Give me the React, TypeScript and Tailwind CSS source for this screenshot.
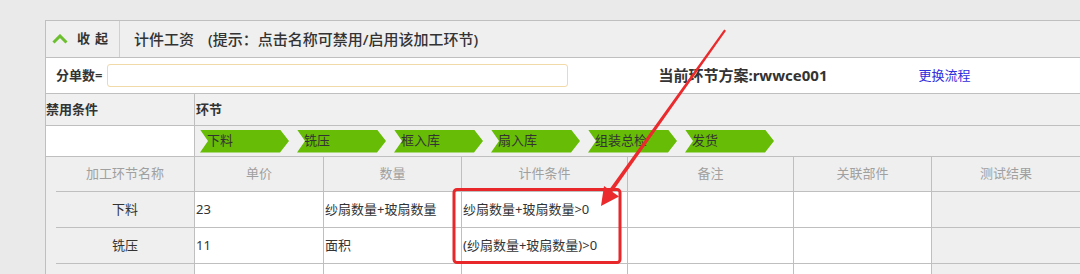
const steps = ['下料', '铣压', '框入库', '扇入库', '组装总检', '发货']

const columns = [
  { label: '单价', w: 'w-[129px]' },
  { label: '数量', w: 'w-[138px]' },
  { label: '计件条件', w: 'w-[166px]' },
  { label: '备注', w: 'w-[166px]' },
  { label: '关联部件', w: 'w-[138px]' },
]

const rows = [
  { name: '下料', cells: ['23', '纱扇数量+玻扇数量', '纱扇数量+玻扇数量>0', '', ''] },
  { name: '铣压', cells: ['11', '面积', '(纱扇数量+玻扇数量)>0', '', ''] },
  { name: '', cells: ['', '', '', '', ''] },
]

function Chevron({ label }: { label: string }) {
  return (
    <div className="flex h-[23px] w-[89px] items-center bg-[#67bc06] pl-[7px] text-[13px] text-[#333] [clip-path:polygon(0_0,calc(100%-9px)_0,100%_50%,calc(100%-9px)_100%,0_100%,8px_50%)]">
      {label}
    </div>
  )
}

function Annotation() {
  // red box + arrow drawn over the table
  return (
    <svg className="pointer-events-none absolute left-0 top-0" width="1080" height="274" viewBox="0 0 1080 274">
      <rect x="454" y="189.5" width="166" height="73" rx="3" fill="none" stroke="#e8272b" strokeWidth="3" />
      <polygon points="724.2,29.6 726,30.8 611.9,192.6 608.6,190.4" fill="#ea2a2c" />
      <polygon points="601,206 604,186 619,196.5" fill="#ea2a2c" />
    </svg>
  )
}

export default function App() {
  return (
    <div className="relative h-[274px] w-[1080px] overflow-hidden bg-[#e9eae9] pl-[45px] pt-[20px] font-['Noto_Sans','Noto_Sans_CJK_SC',sans-serif] text-[13px] text-[#333]">
      <div className="border-l border-t border-[#bfbfbf] bg-white">
        <div className="flex h-[37px] border-b border-[#bfbfbf] bg-[#efefef]">
          <div className="flex w-[74px] items-center border-r border-[#d0d0d0] pl-[6px]">
            <svg width="16" height="10" viewBox="0 0 16 10">
              <path d="M1.5 8.5 L8 2 L14.5 8.5" fill="none" stroke="#6cbf2e" strokeWidth="3" />
            </svg>
            <span className="ml-[9px] font-bold tracking-[5px]">收起</span>
          </div>
          <div className="flex items-center pl-[14px] text-[15px] font-medium">
            <span>计件工资</span>
            <span className="ml-[14px]">(提示：点击名称可禁用/启用该加工环节)</span>
          </div>
        </div>

        <div className="flex h-[36px] items-center border-b border-[#bfbfbf] pl-[10px]">
          <span className="font-bold">分单数=</span>
          <div className="ml-[5px] h-[23px] w-[461px] rounded-[3px] border border-[#f1d9a8] bg-white" />
          <span className="ml-[90px] text-[15px] font-bold">当前环节方案:rwwce001</span>
          <span className="ml-[91px] text-[#2e2edc]">更换流程</span>
        </div>

        <div className="flex h-[32px] border-b border-[#bfbfbf] bg-[#f0f0f0] font-bold">
          <div className="flex w-[149px] items-center border-r border-[#bfbfbf]">禁用条件</div>
          <div className="flex items-center pl-[1px]">环节</div>
        </div>

        <div className="flex h-[31px] border-b border-[#bfbfbf]">
          <div className="w-[149px] border-r border-[#bfbfbf] bg-white" />
          <div className="flex flex-1 items-center gap-[8px] bg-[#f0f0f0] pl-[5px]">
            {steps.map((s) => (
              <Chevron key={s} label={s} />
            ))}
          </div>
        </div>

        <div className="flex h-[35px] bg-[#efefef] text-[#a0a0a0]">
          <div className="flex w-[149px] border-r border-[#bfbfbf] pl-[10px]">
            <div className="flex flex-1 items-center justify-center border-b border-[#bfbfbf]">加工环节名称</div>
          </div>
          {columns.map((c) => (
            <div key={c.label} className={`${c.w} flex items-center justify-center border-b border-r border-[#bfbfbf]`}>
              {c.label}
            </div>
          ))}
          <div className="flex flex-1 items-center justify-center border-b border-[#bfbfbf]">测试结果</div>
        </div>

        {rows.map((r, i) => (
          <div key={i} className="flex h-[36px]">
            <div className="flex w-[149px] border-r border-[#bfbfbf] bg-[#efefef] pl-[10px]">
              <div className="flex flex-1 items-center justify-center border-b border-[#bfbfbf]">{r.name}</div>
            </div>
            {columns.map((c, j) => (
              <div key={c.label} className={`${c.w} flex items-center border-b border-r border-[#bfbfbf] bg-white pl-[1px]`}>
                {r.cells[j]}
              </div>
            ))}
            <div className="flex-1 border-b border-[#bfbfbf] bg-[#efefef]" />
          </div>
        ))}
      </div>
      <Annotation />
    </div>
  )
}
